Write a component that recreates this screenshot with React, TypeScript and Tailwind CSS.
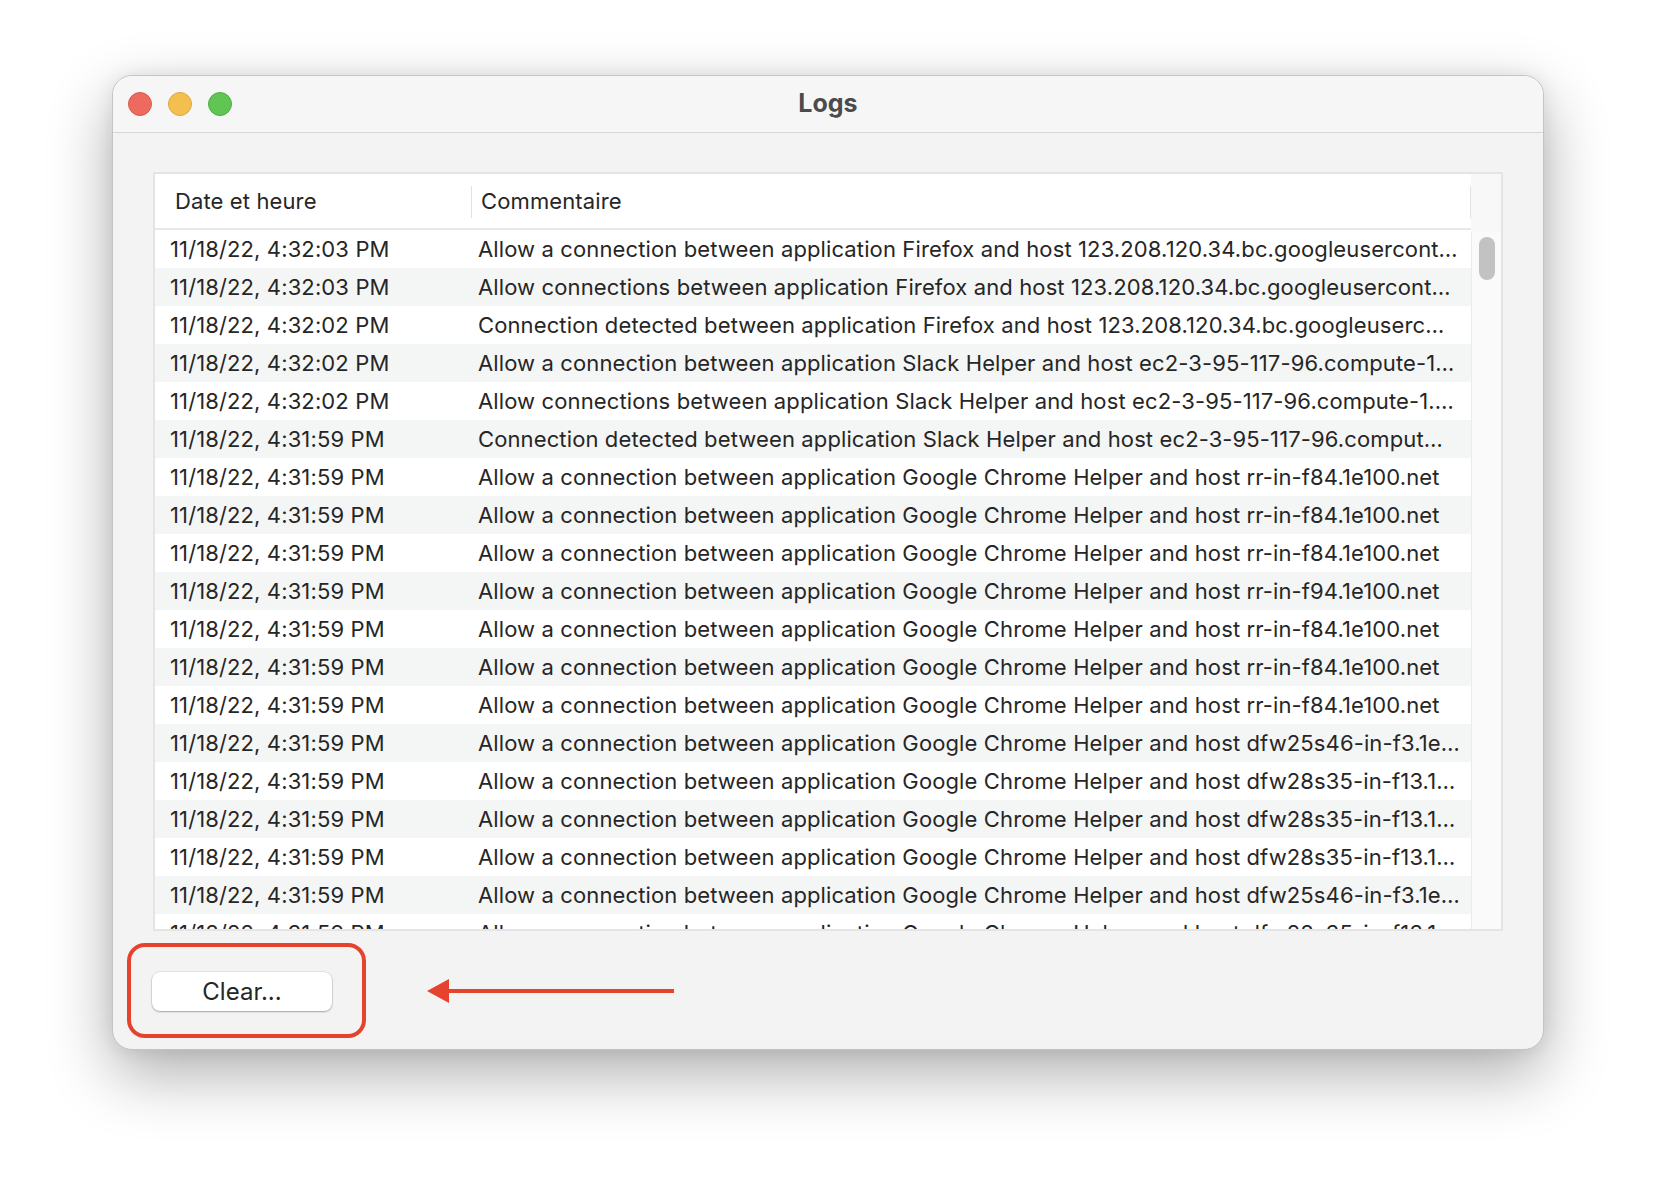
import React from "react";

const ROWS: [string, string][] = [
  ["11/18/22, 4:32:03 PM", "Allow a connection between application Firefox and host 123.208.120.34.bc.googleusercont…"],
  ["11/18/22, 4:32:03 PM", "Allow connections between application Firefox and host 123.208.120.34.bc.googleusercont…"],
  ["11/18/22, 4:32:02 PM", "Connection detected between application Firefox and host 123.208.120.34.bc.googleuserc…"],
  ["11/18/22, 4:32:02 PM", "Allow a connection between application Slack Helper and host ec2-3-95-117-96.compute-1…"],
  ["11/18/22, 4:32:02 PM", "Allow connections between application Slack Helper and host ec2-3-95-117-96.compute-1.…"],
  ["11/18/22, 4:31:59 PM", "Connection detected between application Slack Helper and host ec2-3-95-117-96.comput…"],
  ["11/18/22, 4:31:59 PM", "Allow a connection between application Google Chrome Helper and host rr-in-f84.1e100.net"],
  ["11/18/22, 4:31:59 PM", "Allow a connection between application Google Chrome Helper and host rr-in-f84.1e100.net"],
  ["11/18/22, 4:31:59 PM", "Allow a connection between application Google Chrome Helper and host rr-in-f84.1e100.net"],
  ["11/18/22, 4:31:59 PM", "Allow a connection between application Google Chrome Helper and host rr-in-f94.1e100.net"],
  ["11/18/22, 4:31:59 PM", "Allow a connection between application Google Chrome Helper and host rr-in-f84.1e100.net"],
  ["11/18/22, 4:31:59 PM", "Allow a connection between application Google Chrome Helper and host rr-in-f84.1e100.net"],
  ["11/18/22, 4:31:59 PM", "Allow a connection between application Google Chrome Helper and host rr-in-f84.1e100.net"],
  ["11/18/22, 4:31:59 PM", "Allow a connection between application Google Chrome Helper and host dfw25s46-in-f3.1e…"],
  ["11/18/22, 4:31:59 PM", "Allow a connection between application Google Chrome Helper and host dfw28s35-in-f13.1…"],
  ["11/18/22, 4:31:59 PM", "Allow a connection between application Google Chrome Helper and host dfw28s35-in-f13.1…"],
  ["11/18/22, 4:31:59 PM", "Allow a connection between application Google Chrome Helper and host dfw28s35-in-f13.1…"],
  ["11/18/22, 4:31:59 PM", "Allow a connection between application Google Chrome Helper and host dfw25s46-in-f3.1e…"],
  ["11/18/22, 4:31:59 PM", "Allow a connection between application Google Chrome Helper and host dfw28s35-in-f13.1…"],
];

function TitleBar() {
  return (
    <div className="relative flex h-[57px] shrink-0 items-center gap-[16px] border-b border-[#d6d6d6] bg-[#f6f6f6] pl-[15px]">
      <span className="h-[24px] w-[24px] rounded-full border border-[#d65a4e] bg-[#ed6a5e]" />
      <span className="h-[24px] w-[24px] rounded-full border border-[#dba844] bg-[#f5bf4f]" />
      <span className="h-[24px] w-[24px] rounded-full border border-[#51ad45] bg-[#61c554]" />
      <div className="pointer-events-none absolute inset-0 flex items-center justify-center text-[25px] font-bold text-[#4b4b4b]">
        Logs
      </div>
    </div>
  );
}

function LogTable() {
  return (
    <div className="flex h-[759px] shrink-0 overflow-hidden border-2 border-[#e4e4e4] bg-white text-[22px] tracking-[0.12px] text-[#262626]">
      <div className="flex min-w-0 flex-1 flex-col">
        {/* header */}
        <div className="flex h-[56px] shrink-0 items-center border-b-2 border-[#e8e8e8] pt-[1px]">
          <div className="flex w-[316px] items-center pl-[20px]">Date et heure</div>
          <div className="h-[32px] w-px bg-[#e2e2e2]" />
          <div className="flex flex-1 items-center pl-[9px]">Commentaire</div>
          <div className="h-[32px] w-px bg-[#e2e2e2]" />
        </div>
        {/* rows, the last one is cut by the table bottom */}
        <div className="min-h-0 flex-1 overflow-hidden">
          {ROWS.map(([date, msg], i) => (
            <div
              key={i}
              className={`flex h-[38px] items-center whitespace-nowrap pt-[1px] ${i % 2 === 1 ? "bg-[#f4f5f5]" : "bg-white"}`}
            >
              <div className="w-[316px] shrink-0 pl-[15px]">{date}</div>
              <div className="min-w-0 flex-1 overflow-hidden pl-[7px]">{msg}</div>
            </div>
          ))}
        </div>
      </div>
      {/* scrollbar */}
      <div className="flex w-[30px] shrink-0 flex-col">
        <div className="h-[58px] shrink-0 bg-[#f8f8f8]" />
        <div className="flex-1 border-l border-[#ebebeb] bg-[#fafafa] pl-[7px] pt-[5px]">
          <div className="h-[43px] w-[16px] rounded-full bg-[#c2c2c2]" />
        </div>
      </div>
    </div>
  );
}

export default function App() {
  return (
    <div className="min-h-[1198px] w-[1656px] bg-white pl-[112px] pt-[75px] font-['Inter','Liberation_Sans',sans-serif]">
      <div className="flex h-[975px] w-[1432px] flex-col overflow-hidden rounded-[20px] border border-[#c4c4c4] bg-[#f3f3f3] shadow-[0_24px_64px_rgba(0,0,0,0.32),0_0_18px_rgba(0,0,0,0.08)]">
        <TitleBar />
        <div className="flex flex-1 flex-col px-[40px] pt-[39px]">
          <LogTable />
          <div className="relative mt-[41px] flex">
            <button
              type="button"
              className="ml-[-1px] h-[39px] w-[180px] rounded-[8px] bg-white text-[24px] text-[#262626] shadow-[0_1px_2px_rgba(0,0,0,0.28),0_0_0_0.5px_rgba(0,0,0,0.12)]"
            >
              Clear...
            </button>
            {/* annotation */}
            <div className="absolute left-[-26px] top-[-29px] h-[95px] w-[239px] rounded-[18px] border-4 border-[#e5432d]" />
            <svg className="absolute left-[274px] top-[7px]" width="247" height="24" viewBox="0 0 247 24">
              <line x1="18" y1="12" x2="247" y2="12" stroke="#e5432d" strokeWidth="4" />
              <polygon points="0,12 22,0 22,24" fill="#e5432d" />
            </svg>
          </div>
        </div>
      </div>
    </div>
  );
}
